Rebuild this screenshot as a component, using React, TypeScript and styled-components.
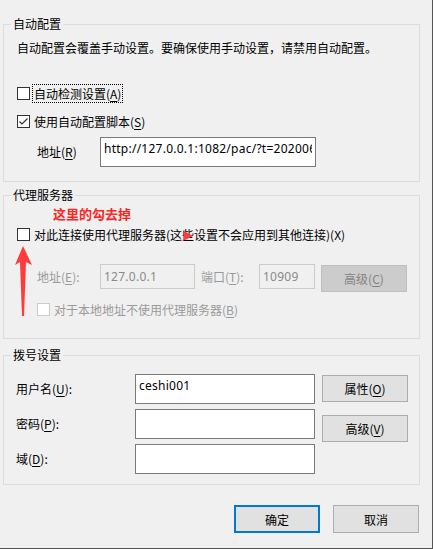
import React from 'react';
import styled, { createGlobalStyle } from 'styled-components';

const GlobalStyle = createGlobalStyle`
  html, body {
    margin: 0;
    padding: 0;
    background: #f0f0f0;
  }
  body {
    font-family: "Noto Sans CJK SC", "Noto Sans", sans-serif;
    font-size: 12px;
    color: #000;
  }
  u {
    text-underline-offset: 2px;
  }
`;

const Window = styled.div`
  width: 433px;
  height: 549px;
  box-sizing: border-box;
  padding-top: 16px;
  background: #f0f0f0;
  border-right: 1px solid #555;
  border-bottom: 1px solid #555;
  overflow: hidden;
`;

const Group = styled.fieldset<{ $top?: number }>`
  position: relative;
  box-sizing: border-box;
  width: 417px;
  min-width: 0;
  margin: ${(p) => p.$top ?? 0}px 0 0 3px;
  padding: 0;
  border: 1px solid #dcdcdc;
`;

const Legend = styled.legend`
  margin-left: 7px;
  padding: 0 2px;
  height: 16px;
  line-height: 16px;
  font-size: 12px;
`;

const Body = styled.div<{ $bottom: number }>`
  position: relative;
  padding-bottom: ${(p) => p.$bottom}px;
`;

const Desc = styled.div`
  margin: 7px 0 0 13px;
  line-height: 18px;
`;

const Note = styled.div`
  margin: 3px 0 0 49px;
  line-height: 16px;
  font-size: 13px;
  font-weight: bold;
  color: #ff2424;
`;

const CheckRow = styled.div<{ $top: number; $indent: number }>`
  display: flex;
  align-items: center;
  height: 19px;
  margin-top: ${(p) => p.$top}px;
  padding-left: ${(p) => p.$indent}px;
`;

const Box = styled.span<{ $disabled?: boolean }>`
  display: inline-flex;
  align-items: center;
  justify-content: center;
  box-sizing: border-box;
  width: 13px;
  height: 13px;
  background: #fff;
  border: 1px solid ${(p) => (p.$disabled ? '#cccccc' : '#333333')};
`;

const CheckText = styled.span<{ $focus?: boolean; $disabled?: boolean }>`
  box-sizing: border-box;
  height: 19px;
  line-height: 17px;
  margin-left: 2px;
  padding: 0 1px;
  border: 1px dotted ${(p) => (p.$focus ? '#000' : 'transparent')};
  color: ${(p) => (p.$disabled ? '#9a9a9a' : '#000')};
  white-space: nowrap;
`;

const FieldRow = styled.div<{ $top: number }>`
  display: flex;
  align-items: flex-start;
  margin-top: ${(p) => p.$top}px;
  padding-left: 33px;
`;

const Label = styled.span<{ $width: number; $h: number; $disabled?: boolean }>`
  width: ${(p) => p.$width}px;
  line-height: ${(p) => p.$h}px;
  color: ${(p) => (p.$disabled ? '#9a9a9a' : '#000')};
  white-space: nowrap;
  flex: none;
`;

const TextBox = styled.input<{ $width: number; $h: number }>`
  box-sizing: border-box;
  width: ${(p) => p.$width}px;
  height: ${(p) => p.$h}px;
  margin: 0;
  padding: ${(p) => (p.$h > 26 ? '2px 3px 10px' : '0 3px')};
  align-self: flex-start;
  font-family: "Noto Sans", "Noto Sans CJK SC", sans-serif;
  font-size: 12px;
  letter-spacing: 0.25px;
  line-height: 16px;
  color: #000;
  background: #fff;
  border: 1px solid #7a7a7a;
  border-radius: 0;
  outline: none;
  flex: none;
  &:disabled {
    background: #f0f0f0;
    border-color: #cccccc;
    color: #8a8a8a;
  }
`;

const Gap = styled.span<{ $w: number }>`
  width: ${(p) => p.$w}px;
  flex: none;
`;

const Button = styled.button<{ $primary?: boolean; $top?: number }>`
  box-sizing: border-box;
  width: 86px;
  height: ${(p) => (p.$primary !== undefined ? 28 : 27)}px;
  margin: ${(p) => p.$top ?? 0}px 0 0;
  padding: 0;
  font-family: "Noto Sans CJK SC", "Noto Sans", sans-serif;
  font-size: 12px;
  color: #000;
  background: #e1e1e1;
  border: ${(p) => (p.$primary ? '2px solid #0078d7' : '1px solid #adadad')};
  border-radius: 0;
  flex: none;
  &:disabled {
    background: #cccccc;
    border-color: #bfbfbf;
    color: #838383;
  }
`;

const DialRow = styled.div`
  display: flex;
  align-items: flex-start;
`;

const DialFields = styled.div`
  display: grid;
  grid-template-columns: 119px 180px;
  row-gap: 5px;
  margin: 11px 0 0 12px;
`;

const DialButtons = styled.div`
  display: flex;
  flex-direction: column;
  gap: 13px;
  margin: 12px 0 0 7px;
`;

const Footer = styled.div`
  display: flex;
  justify-content: flex-end;
  gap: 13px;
  margin-top: 20px;
  padding-right: 13px;
`;

const Overlay = styled.svg<{ $x: number; $y: number }>`
  position: absolute;
  left: ${(p) => p.$x}px;
  top: ${(p) => p.$y}px;
  pointer-events: none;
`;

function Check({ checked, disabled }: { checked?: boolean; disabled?: boolean }) {
  return (
    <Box $disabled={disabled}>
      {checked && (
        <svg width="11" height="11" viewBox="0 0 11 11">
          <polyline points="1.5,5.5 4,8 9.5,2.5" fill="none" stroke="#333" strokeWidth="1.2" />
        </svg>
      )}
    </Box>
  );
}

export default function App() {
  return (
    <>
      <GlobalStyle />
      <Window>
        <Group>
          <Legend>自动配置</Legend>
          <Body $bottom={14}>
            <Desc>自动配置会覆盖手动设置。要确保使用手动设置，请禁用自动配置。</Desc>
            <CheckRow $top={27} $indent={13}>
              <Check />
              <CheckText $focus>自动检测设置(<u>A</u>)</CheckText>
            </CheckRow>
            <CheckRow $top={9} $indent={13}>
              <Check checked />
              <CheckText>使用自动配置脚本(<u>S</u>)</CheckText>
            </CheckRow>
            <FieldRow $top={6}>
              <Label $width={63} $h={30}>地址(<u>R</u>)</Label>
              <TextBox $width={216} $h={30} readOnly value="http://127.0.0.1:1082/pac/?t=20200610" />
            </FieldRow>
          </Body>
        </Group>

        <Group $top={5}>
          <Legend>代理服务器</Legend>
          <Body $bottom={19}>
            <Note>这里的勾去掉</Note>
            <CheckRow $top={3} $indent={13}>
              <Check />
              <CheckText>对此连接使用代理服务器(这些设置不会应用到其他连接)(X)</CheckText>
            </CheckRow>
            <FieldRow $top={20}>
              <Label $width={63} $h={25} $disabled>地址(<u>E</u>):</Label>
              <TextBox $width={95} $h={25} disabled value="127.0.0.1" />
              <Gap $w={6} />
              <Label $width={58} $h={25} $disabled>端口(<u>T</u>):</Label>
              <TextBox $width={56} $h={25} disabled value="10909" />
              <Gap $w={6} />
              <Button disabled $top={1}>高级(<u>C</u>)</Button>
            </FieldRow>
            <CheckRow $top={8} $indent={33}>
              <Check disabled />
              <CheckText $disabled>对于本地地址不使用代理服务器(<u>B</u>)</CheckText>
            </CheckRow>
            <Overlay $x={11} $y={39} width="20" height="72" viewBox="0 0 20 72">
              <polygon points="8,1 17,20 11,17 9,71 7,71 5,17 0,20" fill="#ff3b3b" />
            </Overlay>
            <Overlay $x={179} $y={25} width="11" height="11" viewBox="0 0 11 11">
              <polygon points="1,0 10,5 0,10" fill="#ff3b3b" />
            </Overlay>
          </Body>
        </Group>

        <Group $top={8}>
          <Legend>拨号设置</Legend>
          <Body $bottom={10}>
            <DialRow>
              <DialFields>
                <Label $width={119} $h={30}>用户名(<u>U</u>):</Label>
                <TextBox $width={180} $h={30} readOnly value="ceshi001" />
                <Label $width={119} $h={30}>密码(<u>P</u>):</Label>
                <TextBox $width={180} $h={30} readOnly value="" />
                <Label $width={119} $h={30}>域(<u>D</u>):</Label>
                <TextBox $width={180} $h={30} readOnly value="" />
              </DialFields>
              <DialButtons>
                <Button>属性(<u>O</u>)</Button>
                <Button>高级(<u>V</u>)</Button>
              </DialButtons>
            </DialRow>
          </Body>
        </Group>

        <Footer>
          <Button $primary>确定</Button>
          <Button $primary={false}>取消</Button>
        </Footer>
      </Window>
    </>
  );
}
